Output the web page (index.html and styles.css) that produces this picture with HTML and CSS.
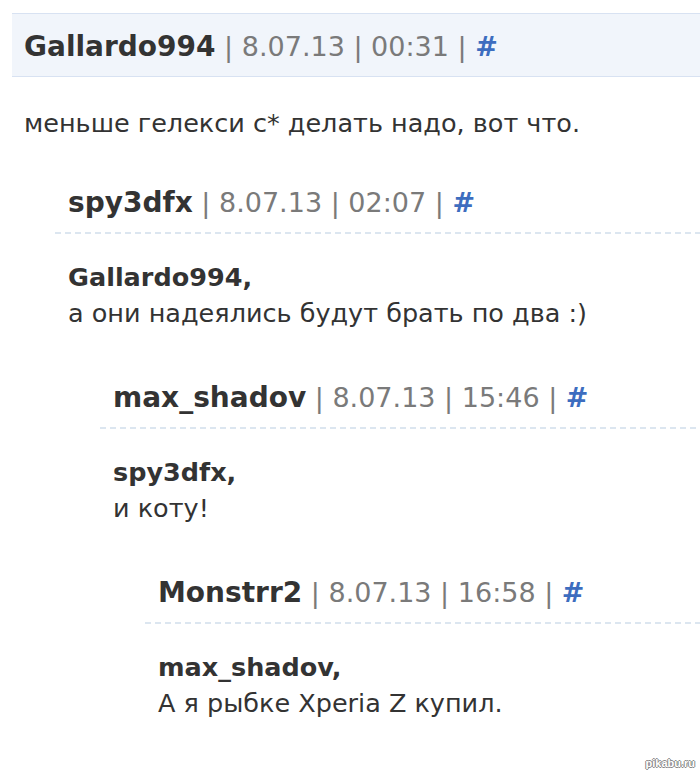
FILE: index.html
```html
<!DOCTYPE html>
<html lang="ru">

<head>
  <meta charset="UTF-8">
  <meta name="viewport" content="width=device-width, initial-scale=1.0">
  <title>Комментарии</title>
  <link rel="stylesheet" href="styles.css">
</head>

<body>
  <div class="page">
    <div class="comment root">
      <div class="head">
        <span class="nick">Gallardo994</span>
        <span class="meta">| 8.07.13 | 00:31 | <a class="anchor" href="#">#</a></span>
      </div>
      <div class="text">меньше гелекси с* делать надо, вот что.</div>

      <div class="replies">
        <div class="comment">
          <div class="head">
            <span class="nick">spy3dfx</span>
            <span class="meta">| 8.07.13 | 02:07 | <a class="anchor" href="#">#</a></span>
          </div>
          <div class="text">
            <b>Gallardo994,</b><br>
            а они надеялись будут брать по два :)
          </div>

          <div class="replies">
            <div class="comment">
              <div class="head">
                <span class="nick">max_shadov</span>
                <span class="meta">| 8.07.13 | 15:46 | <a class="anchor" href="#">#</a></span>
              </div>
              <div class="text">
                <b>spy3dfx,</b><br>
                и коту!
              </div>

              <div class="replies">
                <div class="comment">
                  <div class="head">
                    <span class="nick">Monstrr2</span>
                    <span class="meta">| 8.07.13 | 16:58 | <a class="anchor" href="#">#</a></span>
                  </div>
                  <div class="text">
                    <b>max_shadov,</b><br>
                    А я рыбке Xperia Z купил.
                  </div>
                </div>
              </div>
            </div>
          </div>
        </div>
      </div>
    </div>

    <span class="watermark">pikabu.ru</span>
  </div>
</body>

</html>
```

FILE: styles.css
```css
* {
  padding: 0;
  margin: 0;
}

body {
  background-color: #fff;
  color: #333;
  font-family: "DejaVu Sans", Verdana, sans-serif;
}

.page {
  position: relative;
  min-height: 776px;
  padding: 13px 0 0 12px;
  box-sizing: border-box;
  overflow: hidden;
}

/* шапка комментария */
.head {
  height: 36px;
  line-height: 36px;
  padding: 0 0 13px 13px;
  font-size: 27px;
  white-space: nowrap;
  background: repeating-linear-gradient(to right, #dce6f0 0 6px, transparent 6px 10px) left bottom / 100% 2px no-repeat;
}

.nick {
  font-size: 28px;
  font-weight: bold;
  color: #333;
}

.meta {
  color: #7a7a7a;
}

.anchor {
  color: #3d6dbf;
  font-weight: bold;
  text-decoration: none;
}

/* корневой комментарий с заливкой */
.root > .head {
  height: 58px;
  line-height: 58px;
  padding: 4px 0 0 12px;
  background: #f1f5fb;
  border-top: 1px solid #d8e2f2;
  border-bottom: 1px solid #d8e2f2;
}

.text {
  margin-top: 25px;
  padding-left: 13px;
  font-size: 25.5px;
  line-height: 36px;
}

.root > .text {
  margin-top: 28px;
  padding-left: 12px;
}

.text b {
  font-weight: bold;
}

.replies {
  margin: 49px 0 0 45px;
}

.root > .replies {
  margin: 44px 0 0 43px;
}

/* значок сайта в углу */
.watermark {
  position: absolute;
  right: 5px;
  bottom: 7px;
  font-family: "Liberation Sans", Arial, sans-serif;
  font-size: 11px;
  font-weight: bold;
  color: #fff;
  text-shadow: 1px 0 0 #888, -1px 0 0 #888, 0 1px 0 #888, 0 -1px 0 #888;
}
```
